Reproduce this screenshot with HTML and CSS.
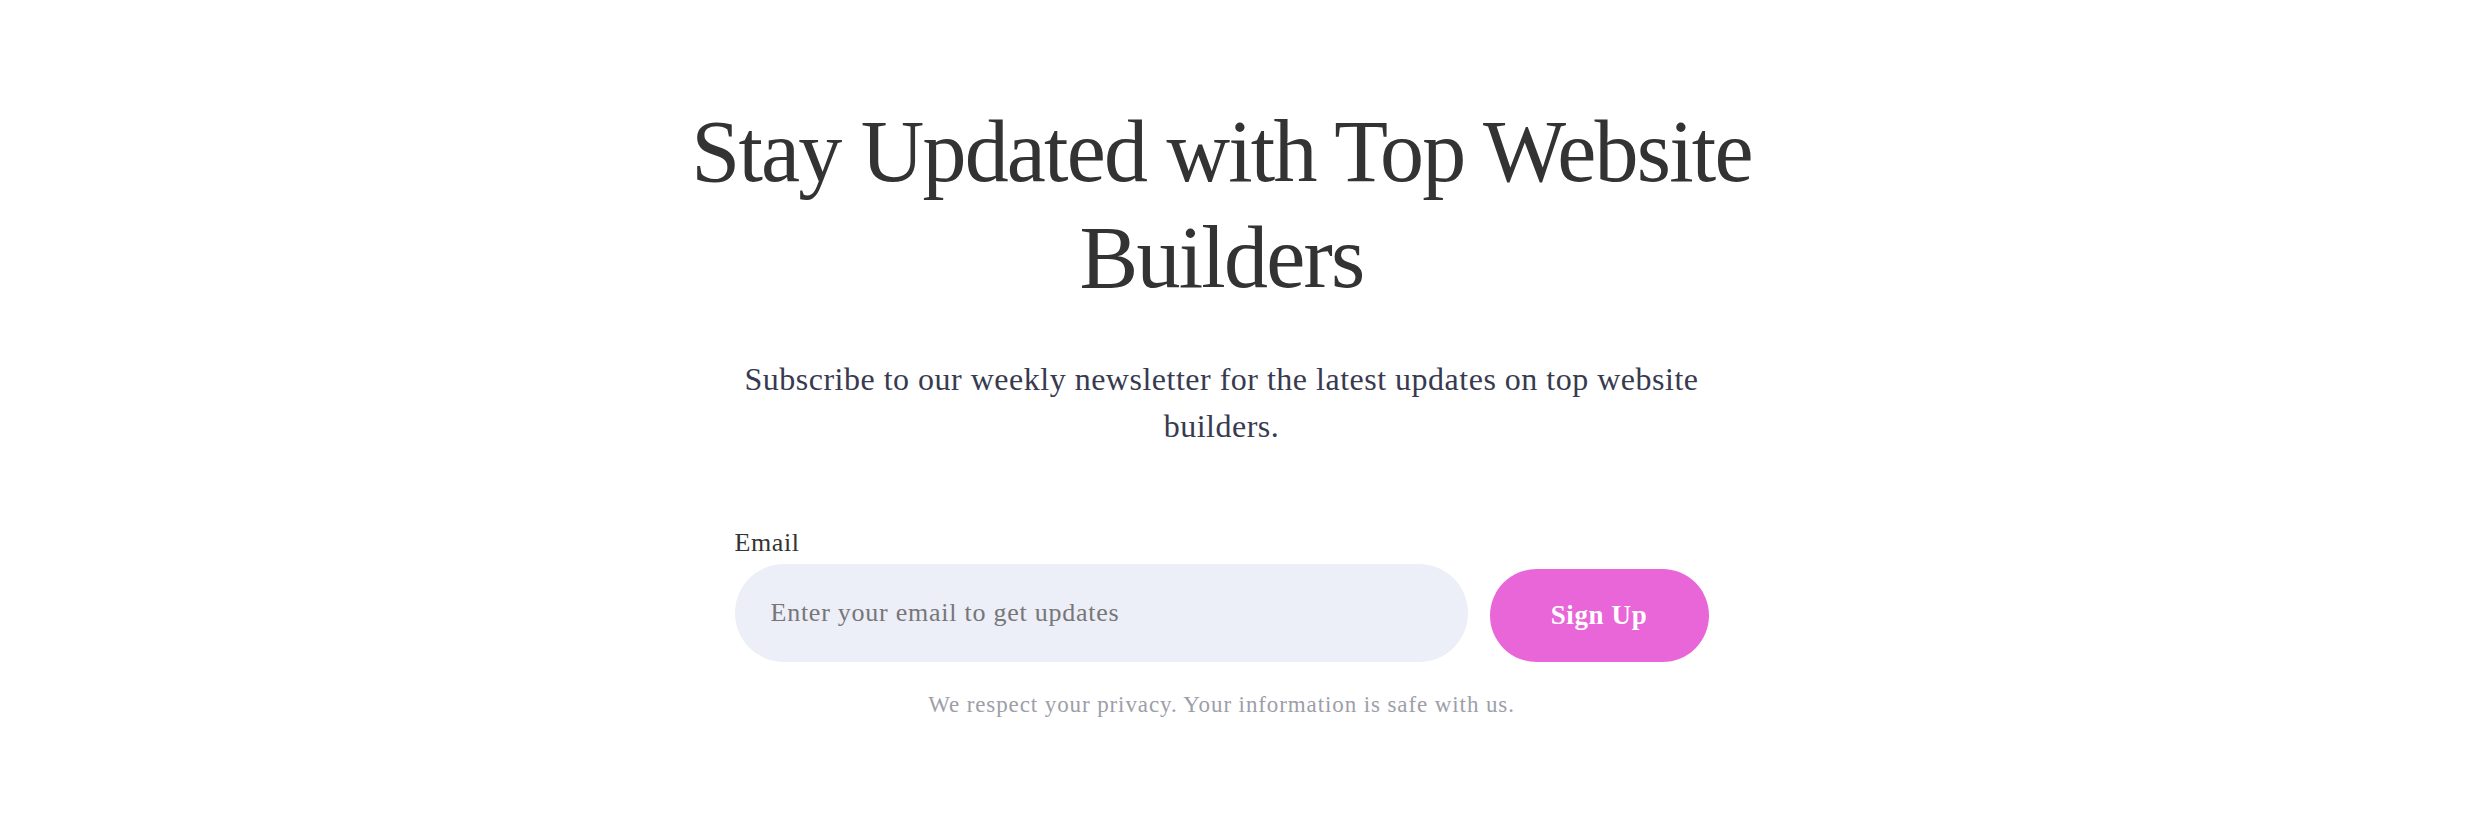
FILE: index.html
```html
<!DOCTYPE html>
<html lang="en">
<head>
<meta charset="utf-8">
<title>Newsletter</title>
<link rel="stylesheet" href="styles.css">
</head>
<body>
<main class="page">
  <section class="newsletter">
    <h1 class="title">Stay Updated with Top Website Builders</h1>
    <p class="lead">Subscribe to our weekly newsletter for the latest updates on top website builders.</p>
    <form class="form" onsubmit="return false;">
      <div class="row">
        <div class="field">
          <label class="label" for="email">Email</label>
          <input class="input" id="email" type="email" placeholder="Enter your email to get updates">
        </div>
        <button class="button" type="submit">Sign Up</button>
      </div>
      <p class="note">We respect your privacy. Your information is safe with us.</p>
    </form>
  </section>
</main>
</body>
</html>
```
FILE: styles.css
```css
* { box-sizing: border-box; }
html, body { margin: 0; padding: 0; background: #ffffff; }
body {
  font-family: "Liberation Serif", "Times New Roman", serif;
  color: #333333;
}
.page {
  width: 2443px;
  padding-top: 99px;
}
.newsletter {
  display: flex;
  flex-direction: column;
  align-items: center;
}
.title {
  margin: 0;
  width: 1200px;
  font-size: 88px;
  line-height: 105.6px;
  font-weight: 400;
  letter-spacing: -1.8px;
  text-align: center;
  color: #333333;
}
.lead {
  margin: 46px 0 0;
  width: 990px;
  font-size: 32px;
  line-height: 47px;
  letter-spacing: 0.5px;
  text-align: center;
  color: #383a50;
}
.form {
  margin-top: 75px;
  width: 974px;
  display: flex;
  flex-direction: column;
}
.row {
  display: flex;
  align-items: flex-end;
  gap: 22px;
}
.field {
  flex: 1;
  display: flex;
  flex-direction: column;
}
.label {
  font-size: 26px;
  line-height: 36px;
  letter-spacing: 0.6px;
  color: #333333;
  margin-bottom: 3px;
}
.input {
  height: 98px;
  border: none;
  border-radius: 49px;
  background: #eceef8;
  padding: 0 40px 0 36px;
  font-family: inherit;
  font-size: 26px;
  letter-spacing: 0.75px;
  color: #333333;
  outline: none;
}
.input::placeholder { color: #777777; }
.button {
  width: 219px;
  height: 93px;
  border: none;
  border-radius: 47px;
  background: #e966d9;
  color: #ffffff;
  font-family: inherit;
  font-size: 27px;
  font-weight: 700;
  letter-spacing: 0.6px;
  cursor: pointer;
}
.note {
  margin: 27px 0 0;
  font-size: 23px;
  line-height: 31px;
  letter-spacing: 0.9px;
  text-align: center;
  color: #9d9ea8;
}
```
